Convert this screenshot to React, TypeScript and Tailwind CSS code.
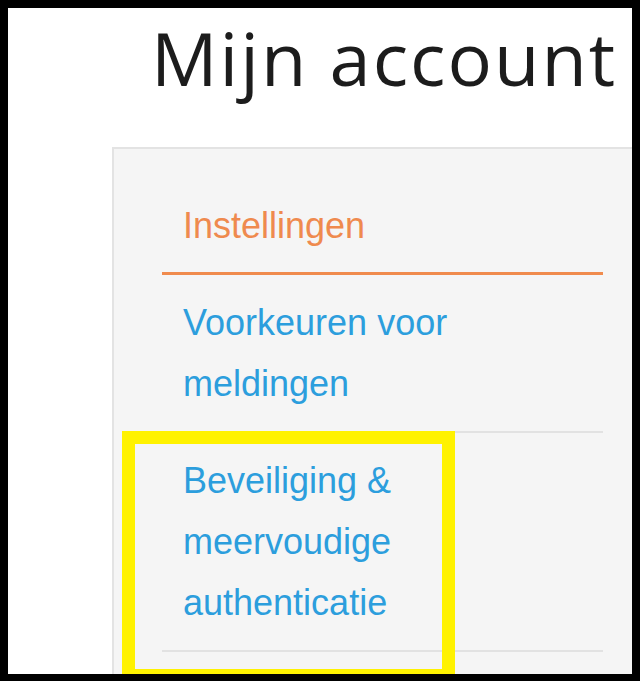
import React from "react";

export default function App() {
  return (
    <div className="w-[640px] h-[681px] bg-black pt-[8px] pl-[8px] pr-[8px] pb-[7px]">
      <div className="relative w-full h-full bg-white overflow-hidden">
        <h1
          className="ml-[143px] mt-0 text-[74px] leading-[100px] tracking-[2px] font-normal text-[#1c1c1c] whitespace-nowrap"
          style={{ fontFamily: '"Open Sans", sans-serif' }}
        >
          Mijn account
        </h1>
        <div
          className="ml-[104px] mt-[39px] w-[560px] h-[600px] bg-[#f5f5f5] border-2 border-[#e3e3e3] pt-[28px] pl-[48px]"
          style={{ fontFamily: '"Liberation Sans", Arial, sans-serif' }}
        >
          <ul className="w-[441px] text-[36px] leading-[61px]">
            <li className="pt-[18px] pb-[16px] pl-[21px] border-b-[3px] border-[#f08b4d] text-[#ef8a4e]">
              Instellingen
            </li>
            <li className="py-[17px] pl-[21px] border-b-2 border-[#e2e2e2] text-[#2c9edd]">
              <span className="block max-w-[340px]">Voorkeuren voor meldingen</span>
            </li>
            <li className="py-[17px] pl-[21px] border-b-2 border-[#e2e2e2] text-[#2c9edd]">
              <span className="block max-w-[340px]">Beveiliging &amp; meervoudige authenticatie</span>
            </li>
          </ul>
        </div>
        <div className="absolute left-[114px] top-[423px] w-[333px] h-[251px] border-[13px] border-[#fff200]" />
      </div>
    </div>
  );
}
